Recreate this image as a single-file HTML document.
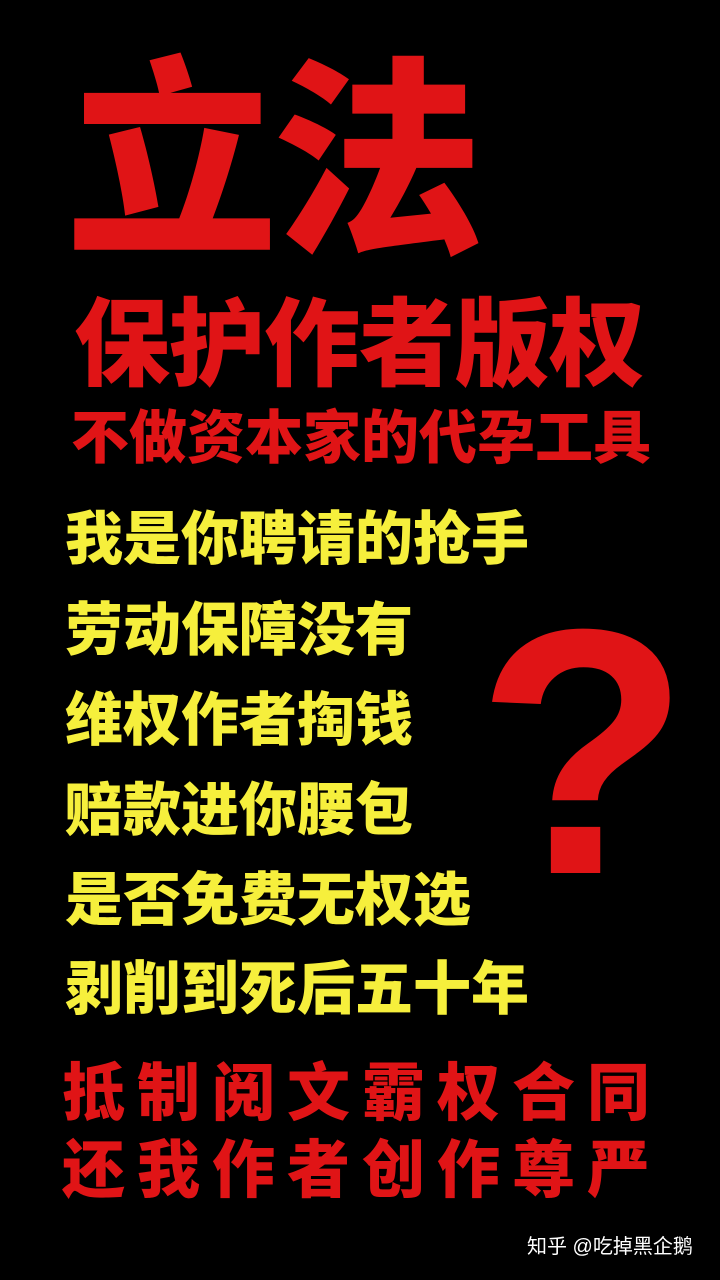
<!DOCTYPE html>
<html><head><meta charset="utf-8"><style>
body{margin:0;width:720px;height:1280px;background:#000;overflow:hidden;position:relative;font-family:"Liberation Sans","Noto Sans CJK SC",sans-serif;}
.t{position:absolute;white-space:nowrap;font-weight:900;line-height:1;}
.r{color:#e01416;}
.y{color:#f6ef3c;font-size:58px;left:65px;letter-spacing:0px;}
</style></head><body>
<div class="t r" style="left:66px;top:58px;font-size:212px;letter-spacing:-6px;">立法</div>
<div class="t r" style="left:74px;top:298px;font-size:96px;letter-spacing:-1px;">保护作者版权</div>
<div class="t r" style="left:71px;top:410px;font-size:58px;">不做资本家的代孕工具</div>
<div class="t y" style="top:511px;">我是你聘请的抢手</div>
<div class="t y" style="top:602px;">劳动保障没有</div>
<div class="t y" style="top:692px;">维权作者掏钱</div>
<div class="t y" style="top:782px;">赔款进你腰包</div>
<div class="t y" style="top:872px;">是否免费无权选</div>
<div class="t y" style="top:961px;">剥削到死后五十年</div>
<div class="t r" style="left:476px;top:578px;font-size:350px;font-family:'Liberation Sans',sans-serif;font-weight:bold;line-height:1;">?</div>
<div class="t r" style="left:62px;top:1063px;font-size:63px;letter-spacing:12px;">抵制阅文霸权合同</div>
<div class="t r" style="left:62px;top:1140px;font-size:63px;letter-spacing:12px;">还我作者创作尊严</div>
<div class="t" style="left:527px;top:1237px;font-size:20px;color:#fff;font-weight:400;">知乎 @吃掉黑企鹅</div>
</body></html>
